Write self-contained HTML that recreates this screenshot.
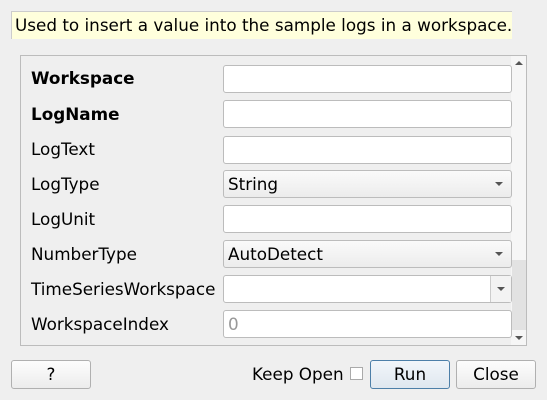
<!DOCTYPE html><html><head><style>
body{margin:0;width:547px;height:400px;background:#efefef;font-family:"DejaVu Sans",sans-serif;font-size:16.8px;color:#000;position:relative;overflow:hidden}
.a{position:absolute}
.tip{left:11px;top:11px;width:501px;height:28px;background:#ffffdc;border-left:1px solid #ccc;border-top:1px solid #ccc;line-height:27px;padding-left:3px;box-sizing:border-box;white-space:nowrap}
.frame{left:20px;top:55px;width:507px;height:291px;border:1px solid #bcbcbc;box-sizing:border-box}
.lab{left:31px;line-height:20px;white-space:nowrap}
.f{left:223px;width:289px;height:28px;background:#fff;border:1px solid #bcbcbc;border-radius:3px;box-sizing:border-box;line-height:26px;padding-left:4px}
.cb{background:linear-gradient(#fafafa,#ececec)}
.arr{position:absolute;right:8px;top:11px;width:0;height:0;border-left:4px solid transparent;border-right:4px solid transparent;border-top:4px solid #555}
.btn{top:360px;height:29px;border:1px solid #b0b0b0;border-radius:3px;background:linear-gradient(#fdfdfd,#ececec);box-sizing:border-box;text-align:center;line-height:27px}
</style></head><body>
<div class="a tip">Used to insert a value into the sample logs in a workspace.</div>
<div class="a frame"></div>
<div class="a" style="left:511px;top:56px;width:15px;height:289px;background:#f6f6f6"></div>
<div class="a" style="left:512px;top:260px;width:14px;height:70px;background:#e2e2e2"></div>
<div class="a" style="left:515px;top:61px;border-left:4px solid transparent;border-right:4px solid transparent;border-bottom:4px solid #555"></div>
<div class="a" style="left:515px;top:336px;border-left:4px solid transparent;border-right:4px solid transparent;border-top:4px solid #555"></div>
<div class="a lab" style="top:68px;font-weight:bold">Workspace</div>
<div class="a lab" style="top:104px;font-weight:bold">LogName</div>
<div class="a lab" style="top:139px">LogText</div>
<div class="a lab" style="top:174px">LogType</div>
<div class="a lab" style="top:209px">LogUnit</div>
<div class="a lab" style="top:244px">NumberType</div>
<div class="a lab" style="top:279px">TimeSeriesWorkspace</div>
<div class="a lab" style="top:314px">WorkspaceIndex</div>
<div class="a f" style="top:65px"></div>
<div class="a f" style="top:100px"></div>
<div class="a f" style="top:136px"></div>
<div class="a f cb" style="top:170px">String<span class="arr"></span></div>
<div class="a f" style="top:205px"></div>
<div class="a f cb" style="top:240px">AutoDetect<span class="arr"></span></div>
<div class="a f" style="top:275px"><div style="position:absolute;right:0;top:0;width:20px;height:26px;border-left:1px solid #ccc;background:#f3f3f3"><span class="arr" style="right:6px"></span></div></div>
<div class="a f" style="top:310px;color:#999">0</div>
<div class="a btn" style="left:11px;width:80px">?</div>
<div class="a" style="left:252px;top:364px;line-height:20px">Keep Open</div>
<div class="a" style="left:350px;top:367px;width:13px;height:13px;background:#fff;border:1px solid #aaa;box-sizing:border-box"></div>
<div class="a btn" style="left:370px;width:80px;border-color:#4d7fa8;background:linear-gradient(#f2f6fa,#dfe7ef)">Run</div>
<div class="a btn" style="left:456px;width:80px">Close</div>
</body></html>
